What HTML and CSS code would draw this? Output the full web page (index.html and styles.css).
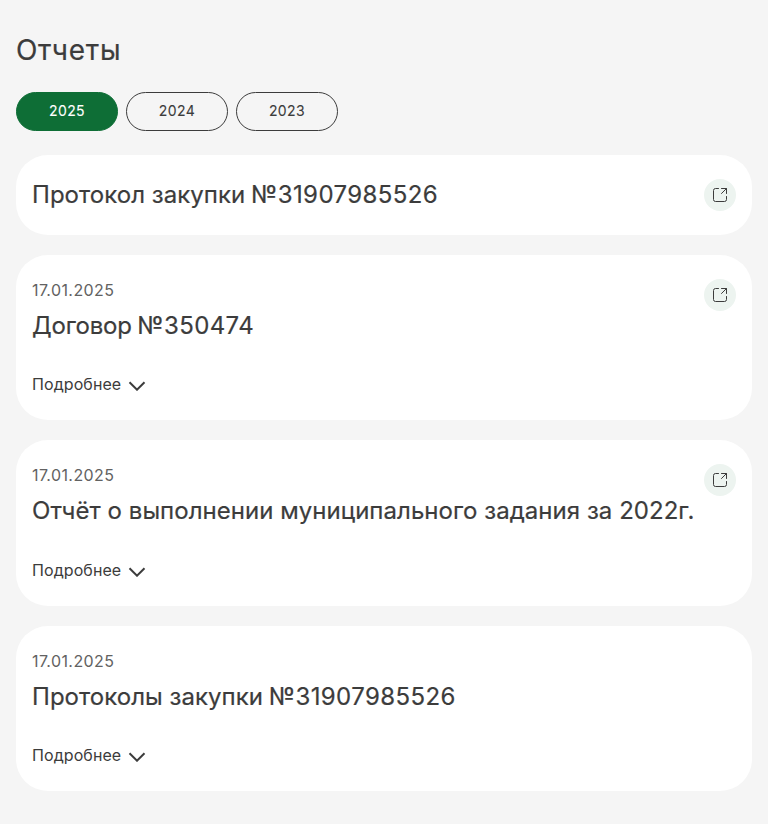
FILE: index.html
```html
<!DOCTYPE html>
<html lang="ru">
<head>
<meta charset="utf-8">
<title>Отчеты</title>
<link rel="stylesheet" href="styles.css">
</head>
<body>
<svg class="sprite" aria-hidden="true">
  <symbol id="open" viewBox="0 0 16 16"><path d="M6.500 1.500H3.500A2 2 0 0 0 1.500 3.500v9A2 2 0 0 0 3.500 14.500h9a2 2 0 0 0 2-2V9.500M9.500 6.500l5-5M9.500 1.500h5v5"/></symbol>
  <symbol id="chevron" viewBox="0 0 18 10"><path d="M1.500 1.200 9 8.700l7.500-7.500"/></symbol>
</svg>
<main class="reports">
  <h1 class="title">Отчеты</h1>
  <nav class="years">
    <button class="year year-active">2025</button>
    <button class="year">2024</button>
    <button class="year">2023</button>
  </nav>
  <section class="list">
    <article class="card card-short">
      <div class="info"><h2 class="name">Протокол закупки <span class="number">№31907985526</span></h2></div>
      <a class="open"><svg><use href="#open"/></svg></a>
    </article>
    <article class="card">
      <div class="info"><time class="date">17.01.2025</time><h2 class="name name-tight">Договор <span class="number">№350474</span></h2><button class="more">Подробнее<svg><use href="#chevron"/></svg></button></div>
      <a class="open"><svg><use href="#open"/></svg></a>
    </article>
    <article class="card">
      <div class="info"><time class="date">17.01.2025</time><h2 class="name">Отчёт о выполнении муниципального задания за 2022г.</h2><button class="more">Подробнее<svg><use href="#chevron"/></svg></button></div>
      <a class="open"><svg><use href="#open"/></svg></a>
    </article>
    <article class="card">
      <div class="info"><time class="date">17.01.2025</time><h2 class="name">Протоколы закупки <span class="number">№31907985526</span></h2><button class="more">Подробнее<svg><use href="#chevron"/></svg></button></div>
    </article>
  </section>
</main>
</body>
</html>
```
FILE: styles.css
```css
* { box-sizing: border-box; }
body { margin: 0; background: #f5f5f5; color: #3c3c3c; font-family: Inter, sans-serif; }
h1, h2 { margin: 0; font-weight: 400; }
button { font: inherit; color: inherit; cursor: pointer; }
.sprite { display: none; }
.reports { padding: 32px 16px; }
.title { font-size: 28px; line-height: 36px; letter-spacing: .7px; -webkit-text-stroke: .2px; }
.years { display: flex; gap: 8px; margin: 24px 0; }
.year { width: 102px; height: 39px; padding: 0 0 2px; border: 1px solid #3c3c3c; border-radius: 20px; background: none; font-size: 14px; letter-spacing: .42px; -webkit-text-stroke: .1px; }
.year-active { background: #0e6e36; border-color: #0e6e36; color: #fff; }
.list { display: flex; flex-direction: column; gap: 20px; }
.card { display: flex; justify-content: space-between; height: 165.4px; padding: 24px 16px; border-radius: 32px; background: #fff; }
.card-short { height: 80px; }
.info { display: flex; flex-direction: column; align-items: flex-start; white-space: nowrap; }
.date { font-size: 16px; line-height: 22px; letter-spacing: .4px; color: #626262; }
.name { font-size: 24px; line-height: 32px; letter-spacing: .04px; -webkit-text-stroke: .2px; }
.name-tight { letter-spacing: -.2px; }
.number { margin-left: -1px; letter-spacing: .4px; }
.date + .name { margin-top: 9px; }
.more { display: flex; align-items: center; gap: 7px; margin-top: 32.2px; padding: 0; border: 0; background: none; font-size: 16px; line-height: 20px; letter-spacing: .08px; }
.more svg { width: 18px; height: 10px; margin-top: 4px; fill: none; stroke: #3c3c3c; stroke-width: 2; }
.open { display: flex; align-items: center; justify-content: center; width: 32px; height: 32px; flex: none; border-radius: 50%; background: #edf4f0; }
.open svg { width: 16px; height: 16px; fill: none; stroke: #3c3c3c; stroke-width: 1; stroke-linecap: round; stroke-linejoin: round; }
```
